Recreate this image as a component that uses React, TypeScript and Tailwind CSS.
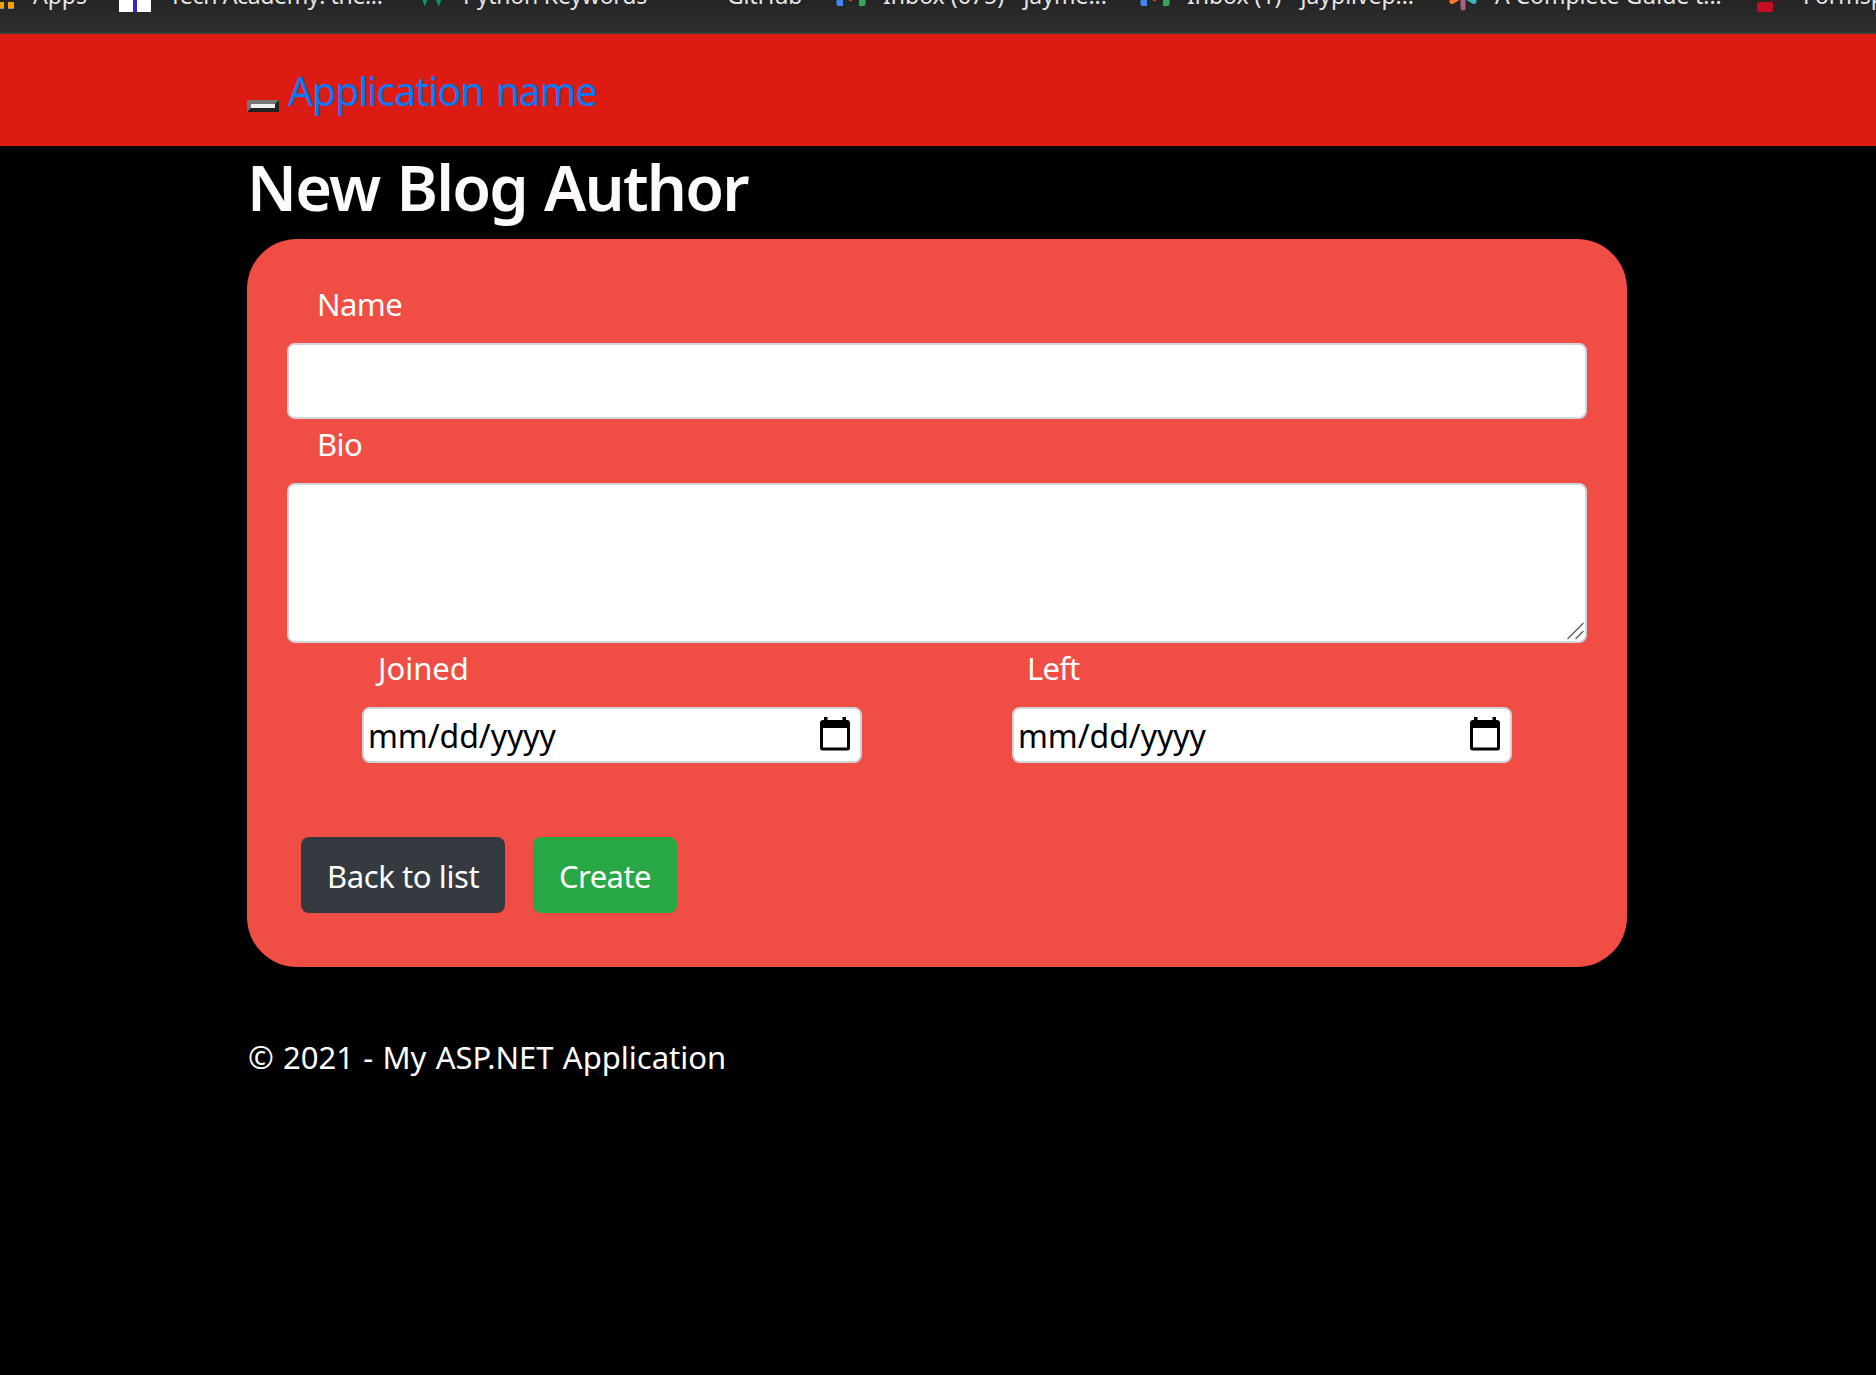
import React from 'react';

function Gmail() {
  return (
    <svg width="32" height="32" viewBox="0 0 32 32">
      <path d="M1.500 8h6.500v15H3.500q-2 0-2-2z" fill="#4285f4" />
      <path d="M24 8h6.500v13q0 2-2 2H24z" fill="#34a853" />
      <path d="M1.500 5l14 8 14-8v4l-14 9.500-14-9.500z" fill="#ea4335" />
    </svg>
  );
}

function Bookmark({ className, label, text, children }: { className: string; label: string; text: string; children: React.ReactNode }) {
  return (
    <div className={`flex shrink-0 items-start ${className}`}>
      <span className="block w-8 shrink-0">{children}</span>
      <span className={`whitespace-nowrap text-[23px] leading-6 ${text}`}>{label}</span>
    </div>
  );
}

function BookmarksBar() {
  return (
    <div className="h-[34px] overflow-hidden border-b-2 border-[#3b3b3a] bg-linear-to-b from-[#242424] to-[#303030] text-[#e6e6e6]">
      <div className="-mt-[17px] -ml-[18px] flex w-[2200px] items-start">
        <Bookmark className="w-[137px]" label="Apps" text="ml-[19px]">
          <svg width="32" height="32" viewBox="0 0 32 32">
            <path d="M15 19h7v6h-7zM26 19h6v6h-6z" fill="#f5a300" />
            <path d="M15 25h7v1h-7zM26 25h6v1h-6z" fill="#8d8d8d" />
          </svg>
        </Bookmark>
        <Bookmark className="w-[297px]" label="Tech Academy: the..." text="ml-[18px] tracking-[-0.35px]">
          <svg width="32" height="29" viewBox="0 0 32 29">
            <path d="M0 0h32v29H0z" fill="#fff" />
            <path d="M14 0h4v29h-4z" fill="#3428c8" />
          </svg>
        </Bookmark>
        <Bookmark className="w-[263px]" label="Python Keywords" text="ml-[15px] tracking-[-0.2px]">
          <svg width="32" height="32" viewBox="0 0 32 32">
            <path d="M2 5l6.800 18.500L15.700 7l7 16.500L30 5z" fill="#059862" />
          </svg>
        </Bookmark>
        <Bookmark className="w-[156px]" label="GitHub" text="ml-[16px] tracking-[-0.2px]">
          <svg width="32" height="32" viewBox="0 0 32 32">
            <path d="M16 0a15 15 0 0 0-5 28c1 0 1-1 1-3-4 1-5-2-6-3 3 0 4 2 6 1l1-2c-9-2-7-10-5-11V6l4 1h8l4-1v4c2 1 4 9-5 11l1 3v4A15 15 0 0 0 16 0z" fill="#20292f" />
          </svg>
        </Bookmark>
        <Bookmark className="w-[304px]" label="Inbox (675) - jayme..." text="ml-[16px]">
          <Gmail />
        </Bookmark>
        <Bookmark className="w-[308px]" label="Inbox (1) - jayplivep..." text="ml-[16px] tracking-[-0.04px]">
          <Gmail />
        </Bookmark>
        <Bookmark className="w-[308px]" label="A Complete Guide t..." text="ml-[16px] tracking-[-0.05px]">
          <svg width="32" height="32" viewBox="0 0 32 32" fill="none" strokeWidth="5" strokeLinecap="round">
            <path d="M16 12L5 18.500" stroke="#ff7a2e" />
            <path d="M16 12l11 6.500" stroke="#3cb4c0" />
            <path d="M16 12v13" stroke="#a8607c" />
          </svg>
        </Bookmark>
        <Bookmark className="w-[308px]" label="Formspree" text="ml-[16px]">
          <svg width="32" height="32" viewBox="0 0 32 32">
            <rect x="2" y="19" width="16" height="10" rx="2" fill="#c80a22" />
            <path d="M16 17h10v2H16z" fill="#4a1c22" />
          </svg>
        </Bookmark>
      </div>
    </div>
  );
}

function DateField({ label, labelClass }: { label: string; labelClass: string }) {
  return (
    <div className="w-[650px] px-[75px]">
      <label className={`block h-16 text-[31px] leading-[50px] ${labelClass}`}>{label}</label>
      <div className="flex h-14 items-start justify-between rounded-lg border-2 border-[#ced4da] bg-white pr-[10px] pl-1 text-black">
        <span className="text-[32px] leading-[54px] tracking-[-0.05px]">mm/dd/yyyy</span>
        <svg className="mt-[7px]" width="30" height="35" viewBox="0 0 30 35">
          <path
            fillRule="evenodd"
            d="M4 1h3.500v3H22.500V1H26v3h1q3 0 3 3v25q0 2.500-3 2.500H3q-3 0-3-2.500V7q0-3 3-3h1zM3 12v19.500h24V12z"
          />
        </svg>
      </div>
    </div>
  );
}

export default function App() {
  return (
    <div className="h-[1375px] w-[1876px] overflow-hidden bg-black font-['Noto_Sans',sans-serif] text-white">
      <BookmarksBar />
      <header className="flex h-28 items-start bg-[#dc1b12] pl-[247px]">
        <button className="mt-[66px] block h-3 w-8 border-4 border-t-[#767676] border-r-[#212121] border-b-[#212121] border-l-[#767676] bg-[#efefef]" />
        <a className="ml-[9px] pt-[27px] text-[39.2px] leading-[60px] tracking-[-1px] [word-spacing:3px] text-[#007bff]">Application name</a>
      </header>

      <main className="ml-[247px] w-[1380px]">
        <h1 className="h-[93px] pt-[3px] text-[63px] leading-[76px] font-semibold tracking-[-1.8px] [word-spacing:2.5px] text-[#fffafa]">New Blog Author</h1>

        <form className="h-[728px] rounded-[50px] bg-[#f04d45] p-10">
          <label className="block h-16 pl-[30px] text-[31px] leading-[50px] tracking-[-0.6px]">Name</label>
          <input className="block h-[76px] w-full rounded-lg border-2 border-[#ced4da] bg-white" />
          <label className="block h-16 pl-[30px] text-[31px] leading-[50px] tracking-[-0.6px]">Bio</label>
          <div className="flex h-40 items-end justify-end rounded-lg border-2 border-[#ced4da] bg-white">
            <svg width="20" height="20" viewBox="0 0 20 20" stroke="#555" strokeWidth="1.200">
              <path d="M2.500 18L18.500 2M10.500 18l8-8" />
            </svg>
          </div>
          <div className="flex">
            <DateField label="Joined" labelClass="pl-[16px]" />
            <DateField label="Left" labelClass="pl-[15px] tracking-[-0.8px]" />
          </div>
          <div className="mt-[74px] ml-[14px] flex gap-7 text-[31px] leading-[78px]">
            <a className="block h-[76px] w-[204px] rounded-lg bg-[#343a40] pl-[26px] tracking-[-0.4px]">Back to list</a>
            <a className="block h-[76px] w-36 rounded-lg bg-[#28a745] pl-[26px] tracking-[-0.55px]">Create</a>
          </div>
        </form>

        <footer className="pt-[66px] pl-px text-[31px] leading-[48px] [word-spacing:1.2px]">© 2021 - My ASP.NET Application</footer>
      </main>
    </div>
  );
}
